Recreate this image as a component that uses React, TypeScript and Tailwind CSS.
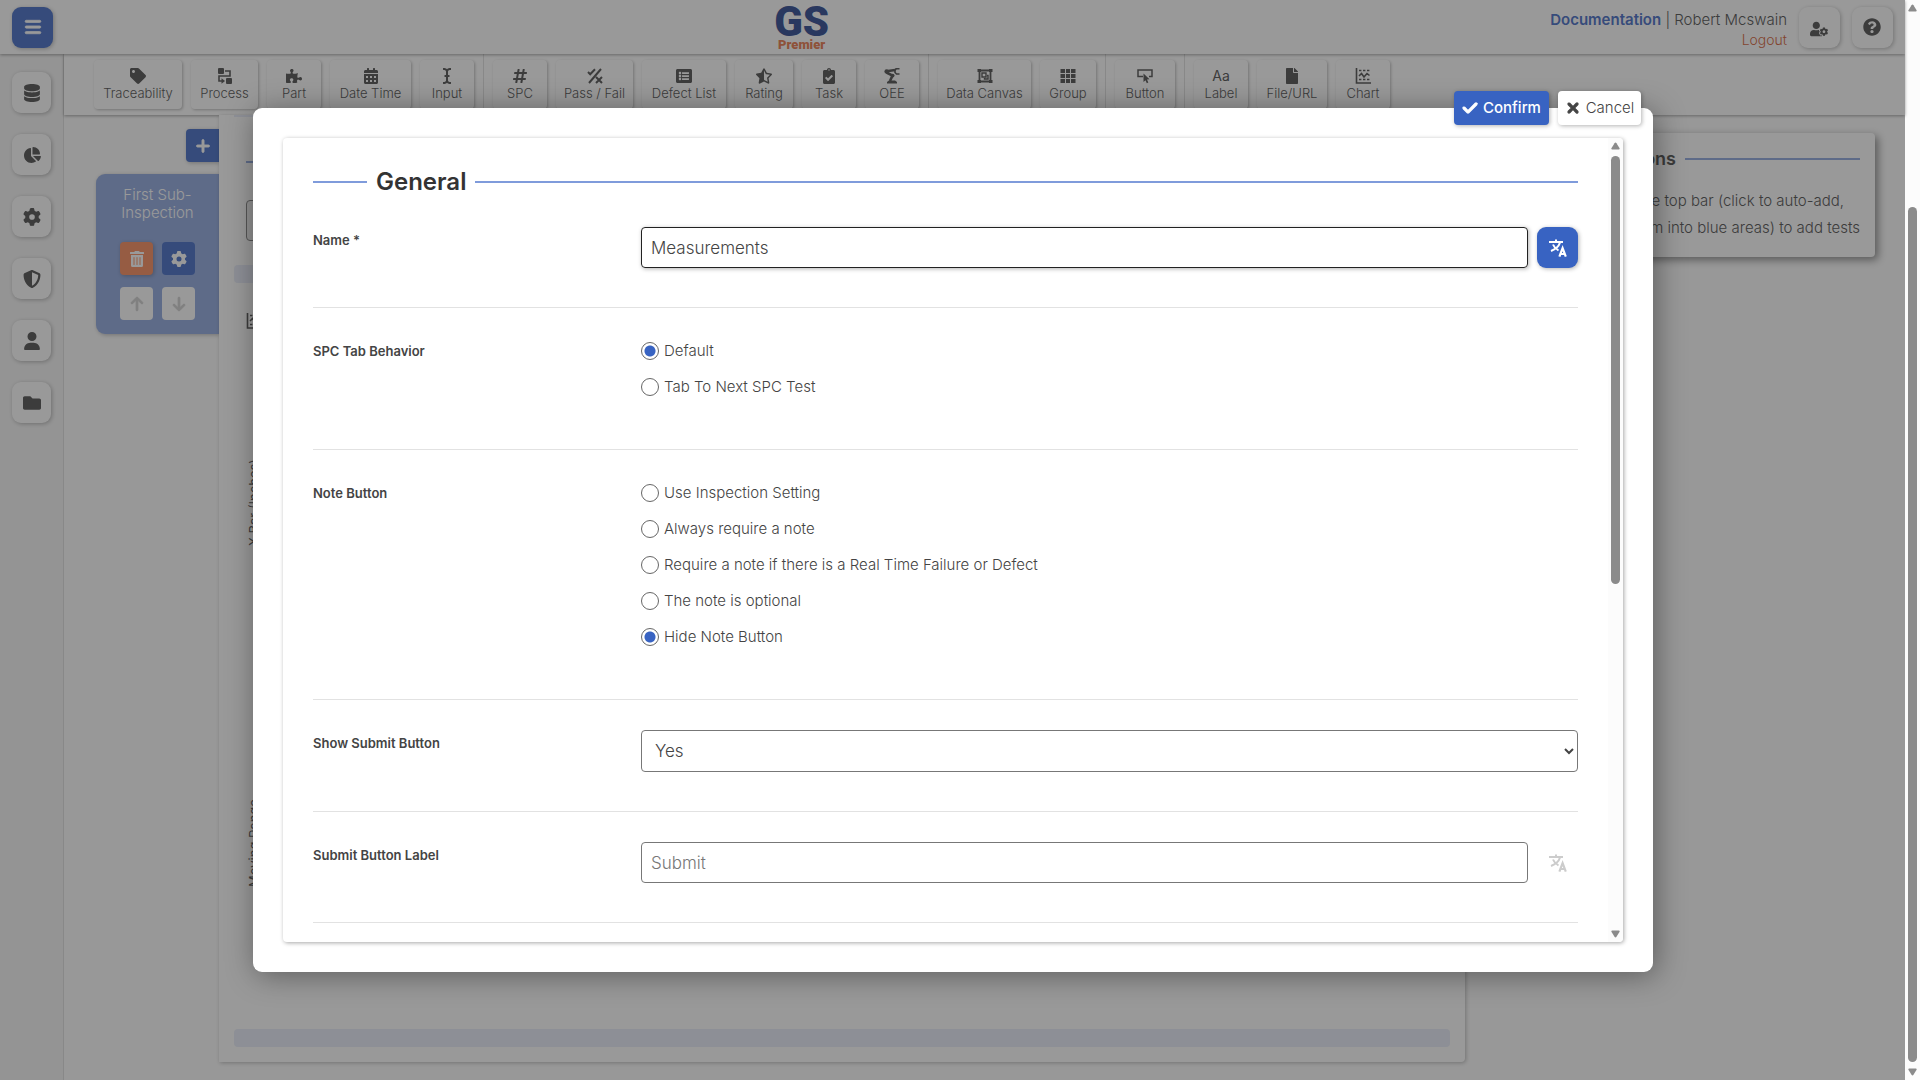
import { ReactNode, useState } from "react";
import {
  FaCalendarAlt,
  FaClipboardCheck,
  FaFile,
  FaFolder,
  FaHashtag,
  FaICursor,
  FaListAlt,
  FaPuzzlePiece,
  FaQuestionCircle,
  FaStarHalfAlt,
  FaTag,
  FaTrashAlt,
  FaUserCog,
} from "react-icons/fa";
import {
  FaArrowDown,
  FaArrowUp,
  FaBars,
  FaChartPie,
  FaCheck,
  FaDatabase,
  FaGear,
  FaPlus,
  FaShieldHalved,
  FaUser,
  FaXmark,
} from "react-icons/fa6";

const ProcessIcon = () => (
  <svg width="15" height="16" viewBox="0 0 15 16" fill="currentColor">
    <rect x="1" y="0" width="6" height="6" rx="1" />
    <rect x="9" y="10" width="6" height="6" rx="1" />
    <path
      d="M8 3H13V8H2V13H5"
      fill="none"
      stroke="currentColor"
      strokeWidth="1.6"
    />
    <path d="M4.5 10.2L8 13L4.5 15.8Z" />
  </svg>
);

const PassFailIcon = () => (
  <svg
    width="16"
    height="16"
    viewBox="0 0 16 16"
    fill="none"
    stroke="currentColor"
    strokeWidth="2"
  >
    <path d="M1 4L3.2 6.2L8 1.2M14 1L2 15M9 9L15 15M15 9L9 15" />
  </svg>
);

const RobotArmIcon = () => (
  <svg width="16" height="16" viewBox="0 0 16 16" fill="currentColor">
    <path d="M3 15.5V14L5 12.5H11L13 14V15.5Z" />
    <path d="M6 13L8.5 7.5L2.5 4.5" stroke="currentColor" strokeWidth="2.6" fill="none" />
    <path d="M2.5 3.2L11 2" stroke="currentColor" strokeWidth="2.4" fill="none" />
    <path d="M15.5 0.8H12L11 2.5V4.5L12.5 6H15.5" stroke="currentColor" strokeWidth="1.6" fill="none" />
    <circle cx="2.6" cy="3.4" r="2.2" />
    <circle cx="8.6" cy="7.6" r="1.9" />
  </svg>
);

const CanvasIcon = () => (
  <svg width="16" height="16" viewBox="0 0 16 16" fill="currentColor">
    <path
      d="M2.5 2.5H13.5V13.5H2.5Z"
      fill="none"
      stroke="currentColor"
      strokeWidth="1.8"
    />
    <path d="M0.5 1H4V4H0.5ZM12 1H15.5V4H12ZM0.5 12H4V15H0.5ZM12 12H15.5V15H12Z" />
    <path
      d="M5 5H9V9H5ZM10 7.5H11V11H7.5V10"
      fill="none"
      stroke="currentColor"
      strokeWidth="1.4"
    />
  </svg>
);

const GridIcon = () => (
  <svg width="16" height="16" viewBox="0 0 16 16" fill="currentColor">
    <path d="M0.5 1H5V5H0.5ZM6 1H10V5H6ZM11 1H15.5V5H11ZM0.5 6H5V10H0.5ZM6 6H10V10H6ZM11 6H15.5V10H11ZM0.5 11H5V15H0.5ZM6 11H10V15H6ZM11 11H15.5V15H11Z" />
  </svg>
);

const ClickIcon = () => (
  <svg width="16" height="16" viewBox="0 0 16 16" fill="currentColor">
    <path
      d="M6 8.5H1V2H15V8.5H12"
      fill="none"
      stroke="currentColor"
      strokeWidth="1.5"
    />
    <path d="M6.5 5.5L12.5 11.3L10 11.6L11.3 14.6L9.8 15.3L8.5 12.3L6.5 14Z" />
  </svg>
);

const ChartIcon = () => (
  <svg
    width="16"
    height="16"
    viewBox="0 0 16 16"
    fill="none"
    stroke="currentColor"
    strokeWidth="1.6"
  >
    <path d="M1.5 0V15H16" />
    <path d="M4 2.5H15M4 11.5H15" strokeDasharray="2.4 1.6" />
    <path d="M4 8L6.5 5.5L9 9L12 5.5L14.5 7.5" />
  </svg>
);

const TranslateIcon = () => (
  <svg
    width="18"
    height="18"
    viewBox="0 0 18 18"
    fill="none"
    stroke="currentColor"
    strokeWidth="2"
  >
    <path d="M0 3H14M7 0.5V3M11 3.5C10 7 7 10 2 12M4 5.5C5 8 7 10 9.5 11.5" />
    <path d="M10.4 17.6L13.6 9.2L16.8 17.6M11.6 15H15.6" strokeWidth="2.2" />
  </svg>
);

type Tool = { label: string; width: string; icon: ReactNode };

const toolGroups: Tool[][] = [
  [
    { label: "Traceability", width: "w-[88px]", icon: <FaTag /> },
    { label: "Process", width: "w-[67px]", icon: <ProcessIcon /> },
    { label: "Part", width: "w-[54px]", icon: <FaPuzzlePiece /> },
    { label: "Date Time", width: "w-[81px]", icon: <FaCalendarAlt /> },
    { label: "Input", width: "w-[54px]", icon: <FaICursor /> },
  ],
  [
    { label: "SPC", width: "w-[54px]", icon: <FaHashtag /> },
    { label: "Pass / Fail", width: "w-[77px]", icon: <PassFailIcon /> },
    { label: "Defect List", width: "w-[84px]", icon: <FaListAlt /> },
    { label: "Rating", width: "w-[58px]", icon: <FaStarHalfAlt /> },
    { label: "Task", width: "w-[54px]", icon: <FaClipboardCheck /> },
    { label: "OEE", width: "w-[54px]", icon: <RobotArmIcon /> },
  ],
  [
    { label: "Data Canvas", width: "w-[93px]", icon: <CanvasIcon /> },
    { label: "Group", width: "w-[56px]", icon: <GridIcon /> },
  ],
  [{ label: "Button", width: "w-[60px]", icon: <ClickIcon /> }],
  [
    {
      label: "Label",
      width: "w-[54px]",
      icon: <span className="text-sm leading-4 font-normal">Aa</span>,
    },
    { label: "File/URL", width: "w-[70px]", icon: <FaFile /> },
    { label: "Chart", width: "w-[54px]", icon: <ChartIcon /> },
  ],
];

const navItems = [
  { label: "Data", icon: <FaDatabase /> },
  { label: "Reports", icon: <FaChartPie /> },
  { label: "Settings", icon: <FaGear /> },
  { label: "Security", icon: <FaShieldHalved /> },
  { label: "Users", icon: <FaUser /> },
  { label: "Files", icon: <FaFolder /> },
];

const Header = () => (
  <header className="relative z-10 flex h-[54px] shrink-0 items-center justify-between bg-white px-3 shadow-[0_1px_3px_rgba(0,0,0,0.4)]">
    <button
      aria-label="Menu"
      className="flex size-[41px] items-center justify-center rounded-[9px] bg-[#3863c2] text-lg text-white shadow-[1px_1px_4px_rgba(0,0,0,0.3)]"
    >
      <FaBars stroke="currentColor" strokeWidth="20" />
    </button>
    <div className="flex flex-col items-center font-[Roboto,sans-serif]">
      <span className="text-[42px] leading-9 font-black text-[#1f3d8a]">
        GS
      </span>
      <span className="text-[13px] leading-[10px] font-black text-[#e8703f]">
        Premier
      </span>
    </div>
    <div className="flex items-center gap-3">
      <div className="pt-[6px] text-right">
        <div className="text-[15px] leading-5">
          <a href="#docs" className="font-semibold text-[#3863c2]">
            Documentation
          </a>{" "}
          | Robert Mcswain
        </div>
        <a href="#logout" className="block text-sm leading-5 text-[#d2552a]">
          Logout
        </a>
      </div>
      <button
        aria-label="User settings"
        className="flex size-[41px] items-center justify-center rounded-[9px] bg-white pt-1 text-lg shadow-[1px_1px_4px_rgba(0,0,0,0.3)]"
      >
        <FaUserCog />
      </button>
      <button
        aria-label="Help"
        className="flex size-[41px] items-center justify-center rounded-[9px] bg-white text-lg shadow-[1px_1px_4px_rgba(0,0,0,0.3)]"
      >
        <FaQuestionCircle />
      </button>
    </div>
  </header>
);

const Sidebar = () => (
  <nav className="flex w-16 shrink-0 flex-col gap-[21px] border-r border-[#ddd] bg-[#f5f5f5] pt-[18px] pl-3">
    {navItems.map((item) => (
      <button
        key={item.label}
        aria-label={item.label}
        className="flex h-[41px] w-[39px] items-center justify-center rounded-[9px] bg-white text-lg shadow-[1px_1px_4px_rgba(0,0,0,0.3)]"
      >
        {item.icon}
      </button>
    ))}
  </nav>
);

const Toolbar = () => (
  <div className="flex h-[61px] shrink-0 bg-white pl-[21px] shadow-[0_1px_3px_rgba(0,0,0,0.4)]">
    {toolGroups.map((group, i) => (
      <div
        key={i}
        className="flex gap-[9px] border-l border-[#ddd] px-[9px] pt-[6px] first:border-l-0"
      >
        {group.map((tool) => (
          <button
            key={tool.label}
            className={`${tool.width} flex h-[49px] flex-col items-center justify-center rounded bg-white text-base whitespace-nowrap shadow-[1px_1px_3px_rgba(0,0,0,0.3)]`}
          >
            {tool.icon}
            <span className="text-[13px] leading-[18px]">{tool.label}</span>
          </button>
        ))}
      </div>
    ))}
  </div>
);

const SubInspection = () => (
  <div className="flex w-[123px] flex-col items-end gap-3 pt-[14px]">
    <button
      aria-label="Add sub-inspection"
      className="flex size-[33px] items-center justify-center rounded-l bg-[#3863c2] text-base text-white shadow-[1px_1px_4px_rgba(0,0,0,0.3)]"
    >
      <FaPlus stroke="currentColor" strokeWidth="30" />
    </button>
    <div className="flex h-40 w-full flex-col items-center rounded-l-[9px] bg-[#89a3dd] pt-3 text-white shadow-[1px_1px_4px_rgba(0,0,0,0.3)]">
      <div className="text-center text-[15px] leading-[18px]">
        First Sub-
        <br />
        Inspection
      </div>
      <div className="mt-5 grid grid-cols-2 gap-x-[9px] gap-y-3">
        <button
          aria-label="Delete"
          className="flex size-[33px] items-center justify-center rounded bg-[#f98553] shadow-[1px_1px_4px_rgba(0,0,0,0.3)]"
        >
          <FaTrashAlt />
        </button>
        <button
          aria-label="Configure"
          className="flex size-[33px] items-center justify-center rounded bg-[#3863c2]"
        >
          <FaGear />
        </button>
        <button
          aria-label="Move up"
          disabled
          className="flex size-[33px] items-center justify-center rounded bg-white text-[#ccc]"
        >
          <FaArrowUp stroke="currentColor" strokeWidth="24" />
        </button>
        <button
          aria-label="Move down"
          disabled
          className="flex size-[33px] items-center justify-center rounded bg-white text-[#ccc]"
        >
          <FaArrowDown stroke="currentColor" strokeWidth="24" />
        </button>
      </div>
    </div>
  </div>
);

const InspectionPanel = () => (
  <section className="mb-[18px] flex flex-1 flex-col rounded-br bg-white px-[15px] pb-[15px] shadow-[1px_1px_4px_rgba(0,0,0,0.3)]">
    <div className="h-[2px] bg-[#e6ebf8]" />
    <div className="flex flex-col items-start px-3 pt-11">
      <div className="h-[2px] w-full bg-[#89a3dd]" />
      <div className="mt-[37px] h-[41px] w-full rounded border border-[#777] bg-[#eee]" />
    </div>
    <div className="mt-6 h-[18px] rounded bg-[#e6ebf8]" />
    <div className="px-3 pt-[30px]">
      <ChartIcon />
      <div className="flex flex-col pt-[133px] text-[13px] leading-4 font-normal whitespace-nowrap">
        <span className="h-[84px] rotate-180 [writing-mode:vertical-rl]">
          X Bar (Inches)
        </span>
        <span className="mt-[257px] h-[84px] rotate-180 [writing-mode:vertical-rl]">
          Moving Range
        </span>
      </div>
    </div>
    <div className="mt-auto h-[18px] rounded bg-[#e6ebf8]" />
  </section>
);

const Instructions = () => (
  <aside className="mt-[18px] mr-[30px] ml-[15px] h-[124px] w-[395px] rounded bg-white px-[15px] shadow-[3px_3px_9px_rgba(0,0,0,0.5)]">
    <div className="flex items-center gap-[9px] pt-3">
      <span className="h-[2px] flex-1 bg-[#89a3dd]" />
      <h2 className="text-lg font-semibold">Instructions</h2>
      <span className="h-[2px] w-[175px] bg-[#89a3dd]" />
    </div>
    <p className="pt-[14px] text-right text-[15px] leading-[27px] whitespace-nowrap">
      <span className="block pr-4">
        Use tests in the top bar (click to auto-add,
      </span>
      <span className="block">or drag them into blue areas) to add tests</span>
    </p>
  </aside>
);

const ScrollArrow = ({ down }: { down?: boolean }) => (
  <svg width="9" height="8" viewBox="0 0 9 8" fill="#8b8b8b">
    {down ? (
      <path d="M1 0.5H8Q9 0.7 8.6 1.8L5.5 6.8Q4.5 8 3.5 6.8L0.4 1.8Q0 0.7 1 0.5Z" />
    ) : (
      <path d="M1 7.5H8Q9 7.3 8.6 6.2L5.5 1.2Q4.5 0 3.5 1.2L0.4 6.2Q0 7.3 1 7.5Z" />
    )}
  </svg>
);

const Row = (props: {
  label: string;
  htmlFor?: string;
  children: ReactNode;
}) => (
  <div className="flex border-b border-[#e2e2e2] pt-[30px] pb-[39px]">
    <div className="w-[328px] shrink-0 text-[13px] leading-[27px] font-semibold">
      {props.htmlFor ? (
        <label htmlFor={props.htmlFor}>{props.label}</label>
      ) : (
        props.label
      )}
    </div>
    <div className="flex-1">{props.children}</div>
  </div>
);

const RadioList = (props: {
  name: string;
  options: string[];
  initial: string;
}) => {
  const [value, setValue] = useState(props.initial);
  return (
    <div role="radiogroup" aria-label={props.name}>
      {props.options.map((option) => (
        <label
          key={option}
          className="mb-[10px] flex h-[26px] w-fit items-center gap-[5px] text-[15px]"
        >
          <input
            type="radio"
            name={props.name}
            checked={value === option}
            onChange={() => setValue(option)}
            className="size-[18px] appearance-none rounded-full border border-[#666] bg-white checked:bg-[radial-gradient(circle,#3863c2_5px,transparent_6px)]"
          />
          {option}
        </label>
      ))}
    </div>
  );
};

const SettingsDialog = () => {
  const [name, setName] = useState("Measurements");
  const [submitLabel, setSubmitLabel] = useState("");
  return (
    <div
      role="dialog"
      aria-label="Settings"
      className="relative flex h-4/5 w-[calc(100%-504px)] rounded-[9px] bg-white p-[30px] shadow-[3px_3px_30px_rgba(0,0,0,0.4)]"
    >
      <div className="absolute -top-[17px] right-3 flex gap-[9px] text-[15px]">
        <button className="flex h-[34px] w-[95px] items-center justify-center gap-[5px] rounded bg-[#3863c2] font-medium text-white shadow-[1px_1px_4px_rgba(0,0,0,0.3)]">
          <FaCheck
            className="text-base"
            stroke="currentColor"
            strokeWidth="40"
          />
          Confirm
        </button>
        <button className="flex h-[34px] w-[83px] items-center justify-center gap-[5px] rounded bg-white shadow-[1px_1px_4px_rgba(0,0,0,0.3)]">
          <FaXmark
            className="text-base"
            stroke="currentColor"
            strokeWidth="40"
          />
          Cancel
        </button>
      </div>
      <div className="flex flex-1 overflow-hidden rounded shadow-[1px_1px_4px_rgba(0,0,0,0.35)]">
        <form className="flex-1 p-[30px] pb-0">
          <div className="mb-px flex h-7 items-center gap-[9px]">
            <span className="h-[2px] w-[54px] bg-[#7f9bdb]" />
            <h1 className="text-2xl font-semibold text-[#333]">General</h1>
            <span className="h-[2px] flex-1 bg-[#7f9bdb]" />
          </div>
          <Row label="Name *" htmlFor="name">
            <div className="flex gap-[9px]">
              <input
                id="name"
                value={name}
                onChange={(e) => setName(e.target.value)}
                className="h-[41px] flex-1 rounded border border-[#222] px-[9px] text-[17px] shadow-[1px_1px_4px_rgba(0,0,0,0.3)] outline-none"
              />
              <button
                type="button"
                aria-label="Translate name"
                className="flex size-[41px] items-center justify-center rounded-[9px] bg-[#3863c2] text-white shadow-[1px_1px_4px_rgba(0,0,0,0.3)]"
              >
                <TranslateIcon />
              </button>
            </div>
          </Row>
          <Row label="SPC Tab Behavior">
            <RadioList
              name="SPC Tab Behavior"
              options={["Default", "Tab To Next SPC Test"]}
              initial="Default"
            />
          </Row>
          <Row label="Note Button">
            <RadioList
              name="Note Button"
              options={[
                "Use Inspection Setting",
                "Always require a note",
                "Require a note if there is a Real Time Failure or Defect",
                "The note is optional",
                "Hide Note Button",
              ]}
              initial="Hide Note Button"
            />
          </Row>
          <Row label="Show Submit Button" htmlFor="show-submit">
            <select
              id="show-submit"
              defaultValue="Yes"
              className="block h-[42px] w-full rounded border border-[#777] bg-white px-[9px] text-[17px]"
            >
              <option>Yes</option>
              <option>No</option>
            </select>
          </Row>
          <Row label="Submit Button Label" htmlFor="submit-label">
            <div className="flex gap-[9px]">
              <input
                id="submit-label"
                value={submitLabel}
                placeholder="Submit"
                onChange={(e) => setSubmitLabel(e.target.value)}
                className="h-[41px] flex-1 rounded border border-[#777] px-[9px] text-[17px] placeholder:text-[#777]"
              />
              <button
                type="button"
                disabled
                aria-label="Translate submit label"
                className="flex size-[41px] items-center justify-center text-[#ccc]"
              >
                <TranslateIcon />
              </button>
            </div>
          </Row>
        </form>
        <div className="flex w-[15px] flex-col items-center bg-[#fcfcfc] py-1">
          <ScrollArrow />
          <div className="mt-[6px] h-[428px] w-[9px] rounded-full bg-[#8b8b8b]" />
          <div className="mt-auto flex">
            <ScrollArrow down />
          </div>
        </div>
      </div>
    </div>
  );
};

const App = () => (
  <div className="flex h-screen overflow-hidden font-[Inter,'Open_Sans',sans-serif] font-light text-[#444]">
    <div className="relative flex flex-1 flex-col">
      <Header />
      <div className="flex flex-1">
        <Sidebar />
        <main className="flex flex-1 flex-col bg-[#fdfdfd]">
          <Toolbar />
          <div className="flex flex-1 pl-8">
            <SubInspection />
            <InspectionPanel />
            <Instructions />
          </div>
        </main>
      </div>
      <div className="absolute inset-0 z-20 flex items-center justify-center bg-[#333]/50 pl-px">
        <SettingsDialog />
      </div>
    </div>
    <div className="flex w-[15px] flex-col items-center bg-[#fcfcfc] py-1">
      <ScrollArrow />
      <div className="mt-[195px] mb-[6px] w-[9px] flex-1 rounded-full bg-[#8b8b8b]" />
      <ScrollArrow down />
    </div>
  </div>
);

export default App;
